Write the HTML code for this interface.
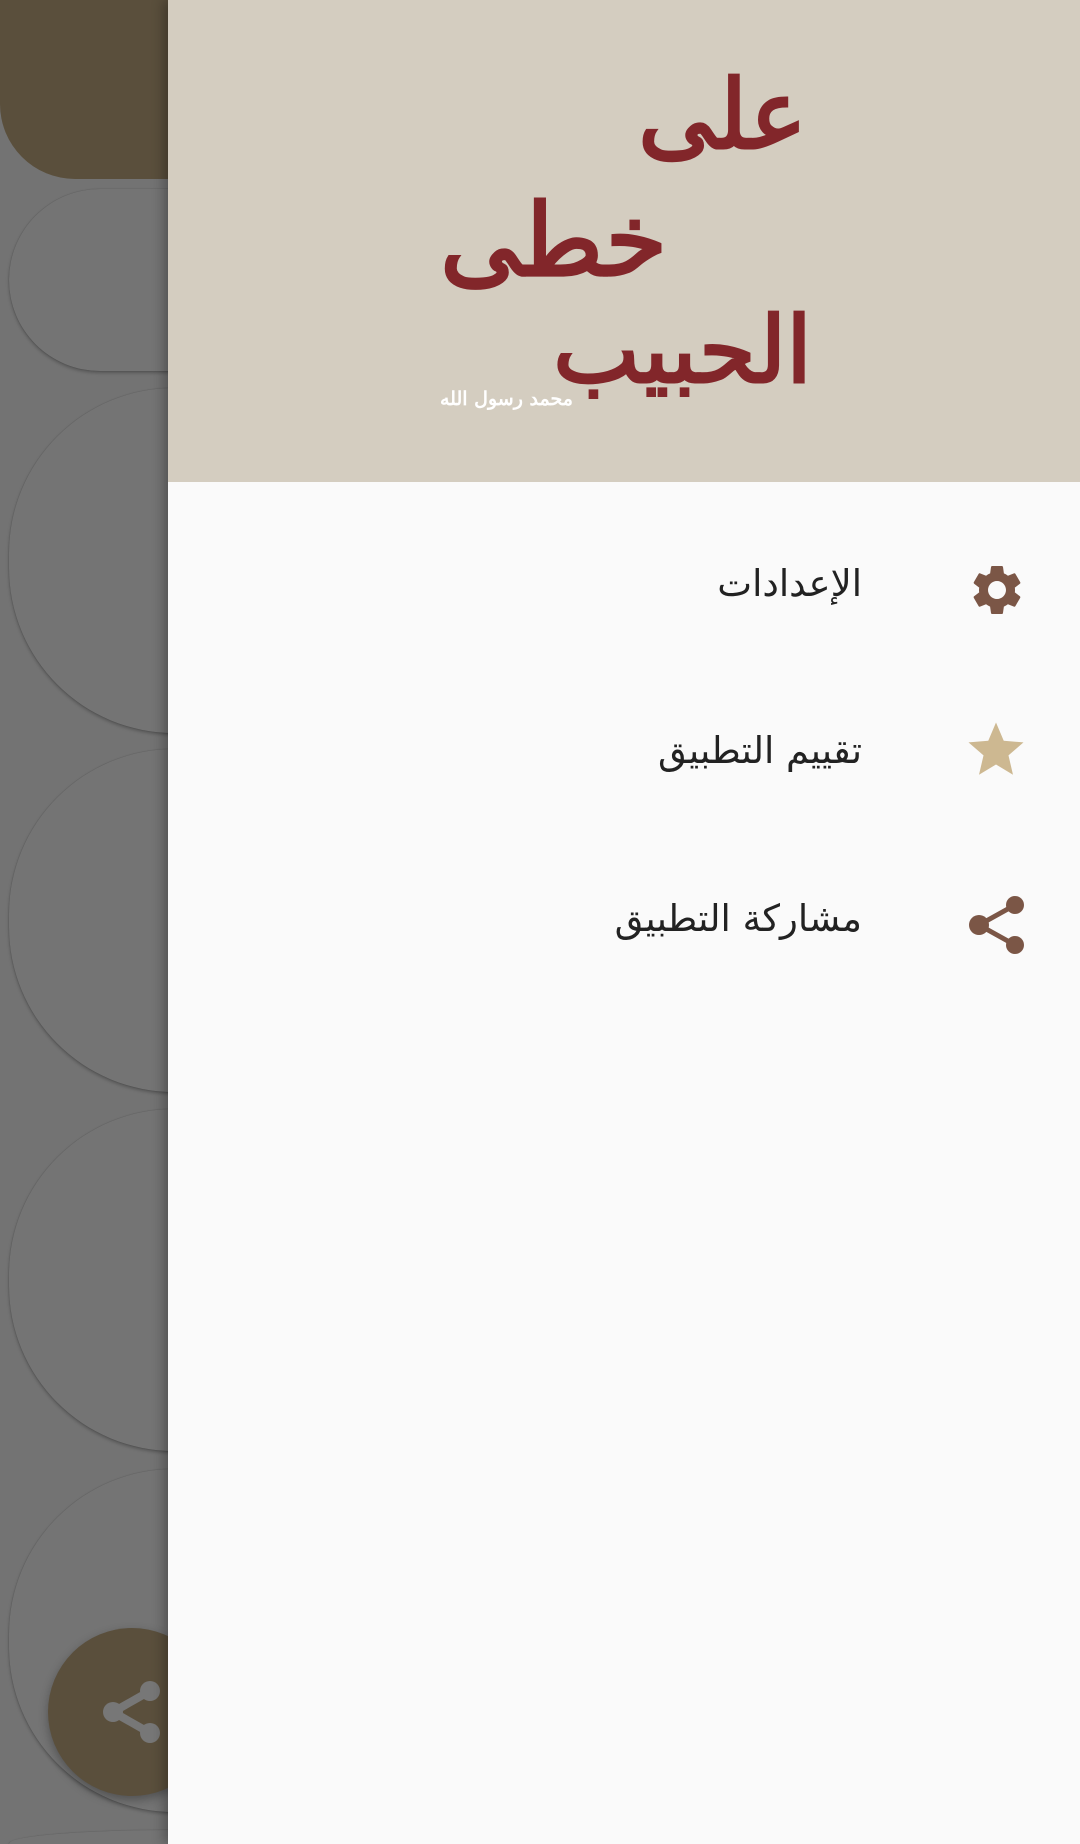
<!DOCTYPE html>
<html style="width:1080px;height:1844px;overflow:hidden"><head><meta charset="utf-8"><style>
*{margin:0;padding:0;box-sizing:border-box}
body{width:1080px;height:1844px;overflow:hidden;background:#737373;position:relative;font-family:"DejaVu Sans",sans-serif}
.top{position:absolute;left:0;top:0;width:300px;height:179px;background:#5a4f3c;border-bottom-left-radius:75px}
.card{position:absolute;left:9px;width:400px;background:#747474;border-radius:165px;box-shadow:0 2px 3px rgba(0,0,0,.25),0 0 1px rgba(0,0,0,.3)}
.fab{position:absolute;left:48px;top:1628px;width:168px;height:168px;border-radius:50%;background:#5a4f3c;box-shadow:0 4px 10px rgba(0,0,0,.3)}
.drawer{position:absolute;left:168px;top:0;width:912px;height:1844px;background:#fafafa;box-shadow:-4px 0 12px rgba(0,0,0,.3)}
.head{position:absolute;left:0;top:0;width:912px;height:482px;background:#d4cdc0;overflow:hidden}
.logo{position:absolute;color:#82262a;font-weight:bold;direction:rtl;white-space:nowrap;font-family:"DejaVu Serif",serif}
.item{position:absolute;right:218px;font-size:37px;color:#222;direction:rtl;font-family:"DejaVu Serif","DejaVu Sans",serif}
.ic{position:absolute;left:799px}
</style></head><body>
<div class="top"></div>
<div class="card" style="top:189px;height:182px;border-radius:91px"></div>
<div class="card" style="top:388px;height:345px"></div>
<div class="card" style="top:749px;height:343px"></div>
<div class="card" style="top:1109px;height:342px"></div>
<div class="card" style="top:1469px;height:343px"></div>
<div class="card" style="top:1830px;height:14px;border-radius:0;border-top-left-radius:160px 14px"></div>
<div class="fab">
<svg width="168" height="168" viewBox="0 0 168 168" style="position:absolute;left:0;top:0"><g stroke="#777" stroke-width="8"><line x1="65" y1="84" x2="102" y2="63"/><line x1="65" y1="84" x2="102" y2="105"/></g><g fill="#777"><circle cx="65" cy="84" r="10"/><circle cx="102" cy="63" r="10"/><circle cx="102" cy="105" r="10"/></g></svg>
</div>
<div class="drawer">
<div class="head">
<div class="logo" style="left:470px;top:50px;font-size:96px;line-height:130px">على</div>
<div class="logo" style="left:272px;top:170px;font-size:100px;line-height:140px">خطى</div>
<div class="logo" style="left:385px;top:290px;font-size:92px;line-height:120px">الحبيب</div>
<div class="logo" style="left:272px;top:388px;font-size:19px;color:#fff">محمد رسول الله</div>
</div>
<div class="item" style="top:562px">الإعدادات</div>
<div class="item" style="top:729px">تقييم التطبيق</div>
<div class="item" style="top:897px">مشاركة التطبيق</div>
<svg class="ic" style="top:560px" width="60" height="60" viewBox="0 0 24 24"><path fill="#7b5646" d="M19.14 12.94c.04-.3.06-.61.06-.94 0-.32-.02-.64-.07-.94l2.03-1.58a.49.49 0 0 0 .12-.61l-1.920-3.32a.488.488 0 0 0-.59-.22l-2.39.96c-.5-.38-1.030-.7-1.62-.94l-.36-2.54a.484.484 0 0 0-.48-.41h-3.84c-.24 0-.43.17-.47.41l-.36 2.54c-.59.24-1.13.57-1.62.94l-2.39-.96c-.22-.08-.47 0-.59.22L2.74 8.87c-.12.21-.08.47.12.61l2.03 1.58c-.05.3-.09.63-.09.94s.02.64.07.94l-2.03 1.58a.49.49 0 0 0-.12.61l1.92 3.32c.12.22.37.29.59.22l2.39-.96c.5.38 1.03.7 1.62.94l.36 2.54c.05.24.24.41.48.41h3.84c.24 0 .44-.17.47-.41l.36-2.54c.59-.24 1.13-.56 1.62-.94l2.39.96c.22.08.47 0 .59-.22l1.92-3.32c.12-.22.07-.47-.12-.61l-2.01-1.58zM12 15.6c-1.98 0-3.6-1.62-3.6-3.6s1.62-3.6 3.6-3.6 3.6 1.62 3.6 3.6-1.62 3.6-3.6 3.6z"/></svg>
<svg class="ic" style="top:717px;left:795px" width="66" height="66" viewBox="0 0 24 24"><path fill="#cdb891" d="M12 17.27L18.18 21l-1.64-7.03L22 9.24l-7.19-.61L12 2 9.19 8.63 2 9.24l5.46 4.73L5.82 21z"/></svg>
<svg class="ic" style="top:894px" width="62" height="62" viewBox="0 0 62 62"><g stroke="#7b5646" stroke-width="5"><line x1="12" y1="31" x2="48" y2="11"/><line x1="12" y1="31" x2="48" y2="51"/></g><g fill="#7b5646"><circle cx="12" cy="31" r="10"/><circle cx="48" cy="11" r="9"/><circle cx="48" cy="51" r="9"/></g></svg>
</div>
</body></html>
